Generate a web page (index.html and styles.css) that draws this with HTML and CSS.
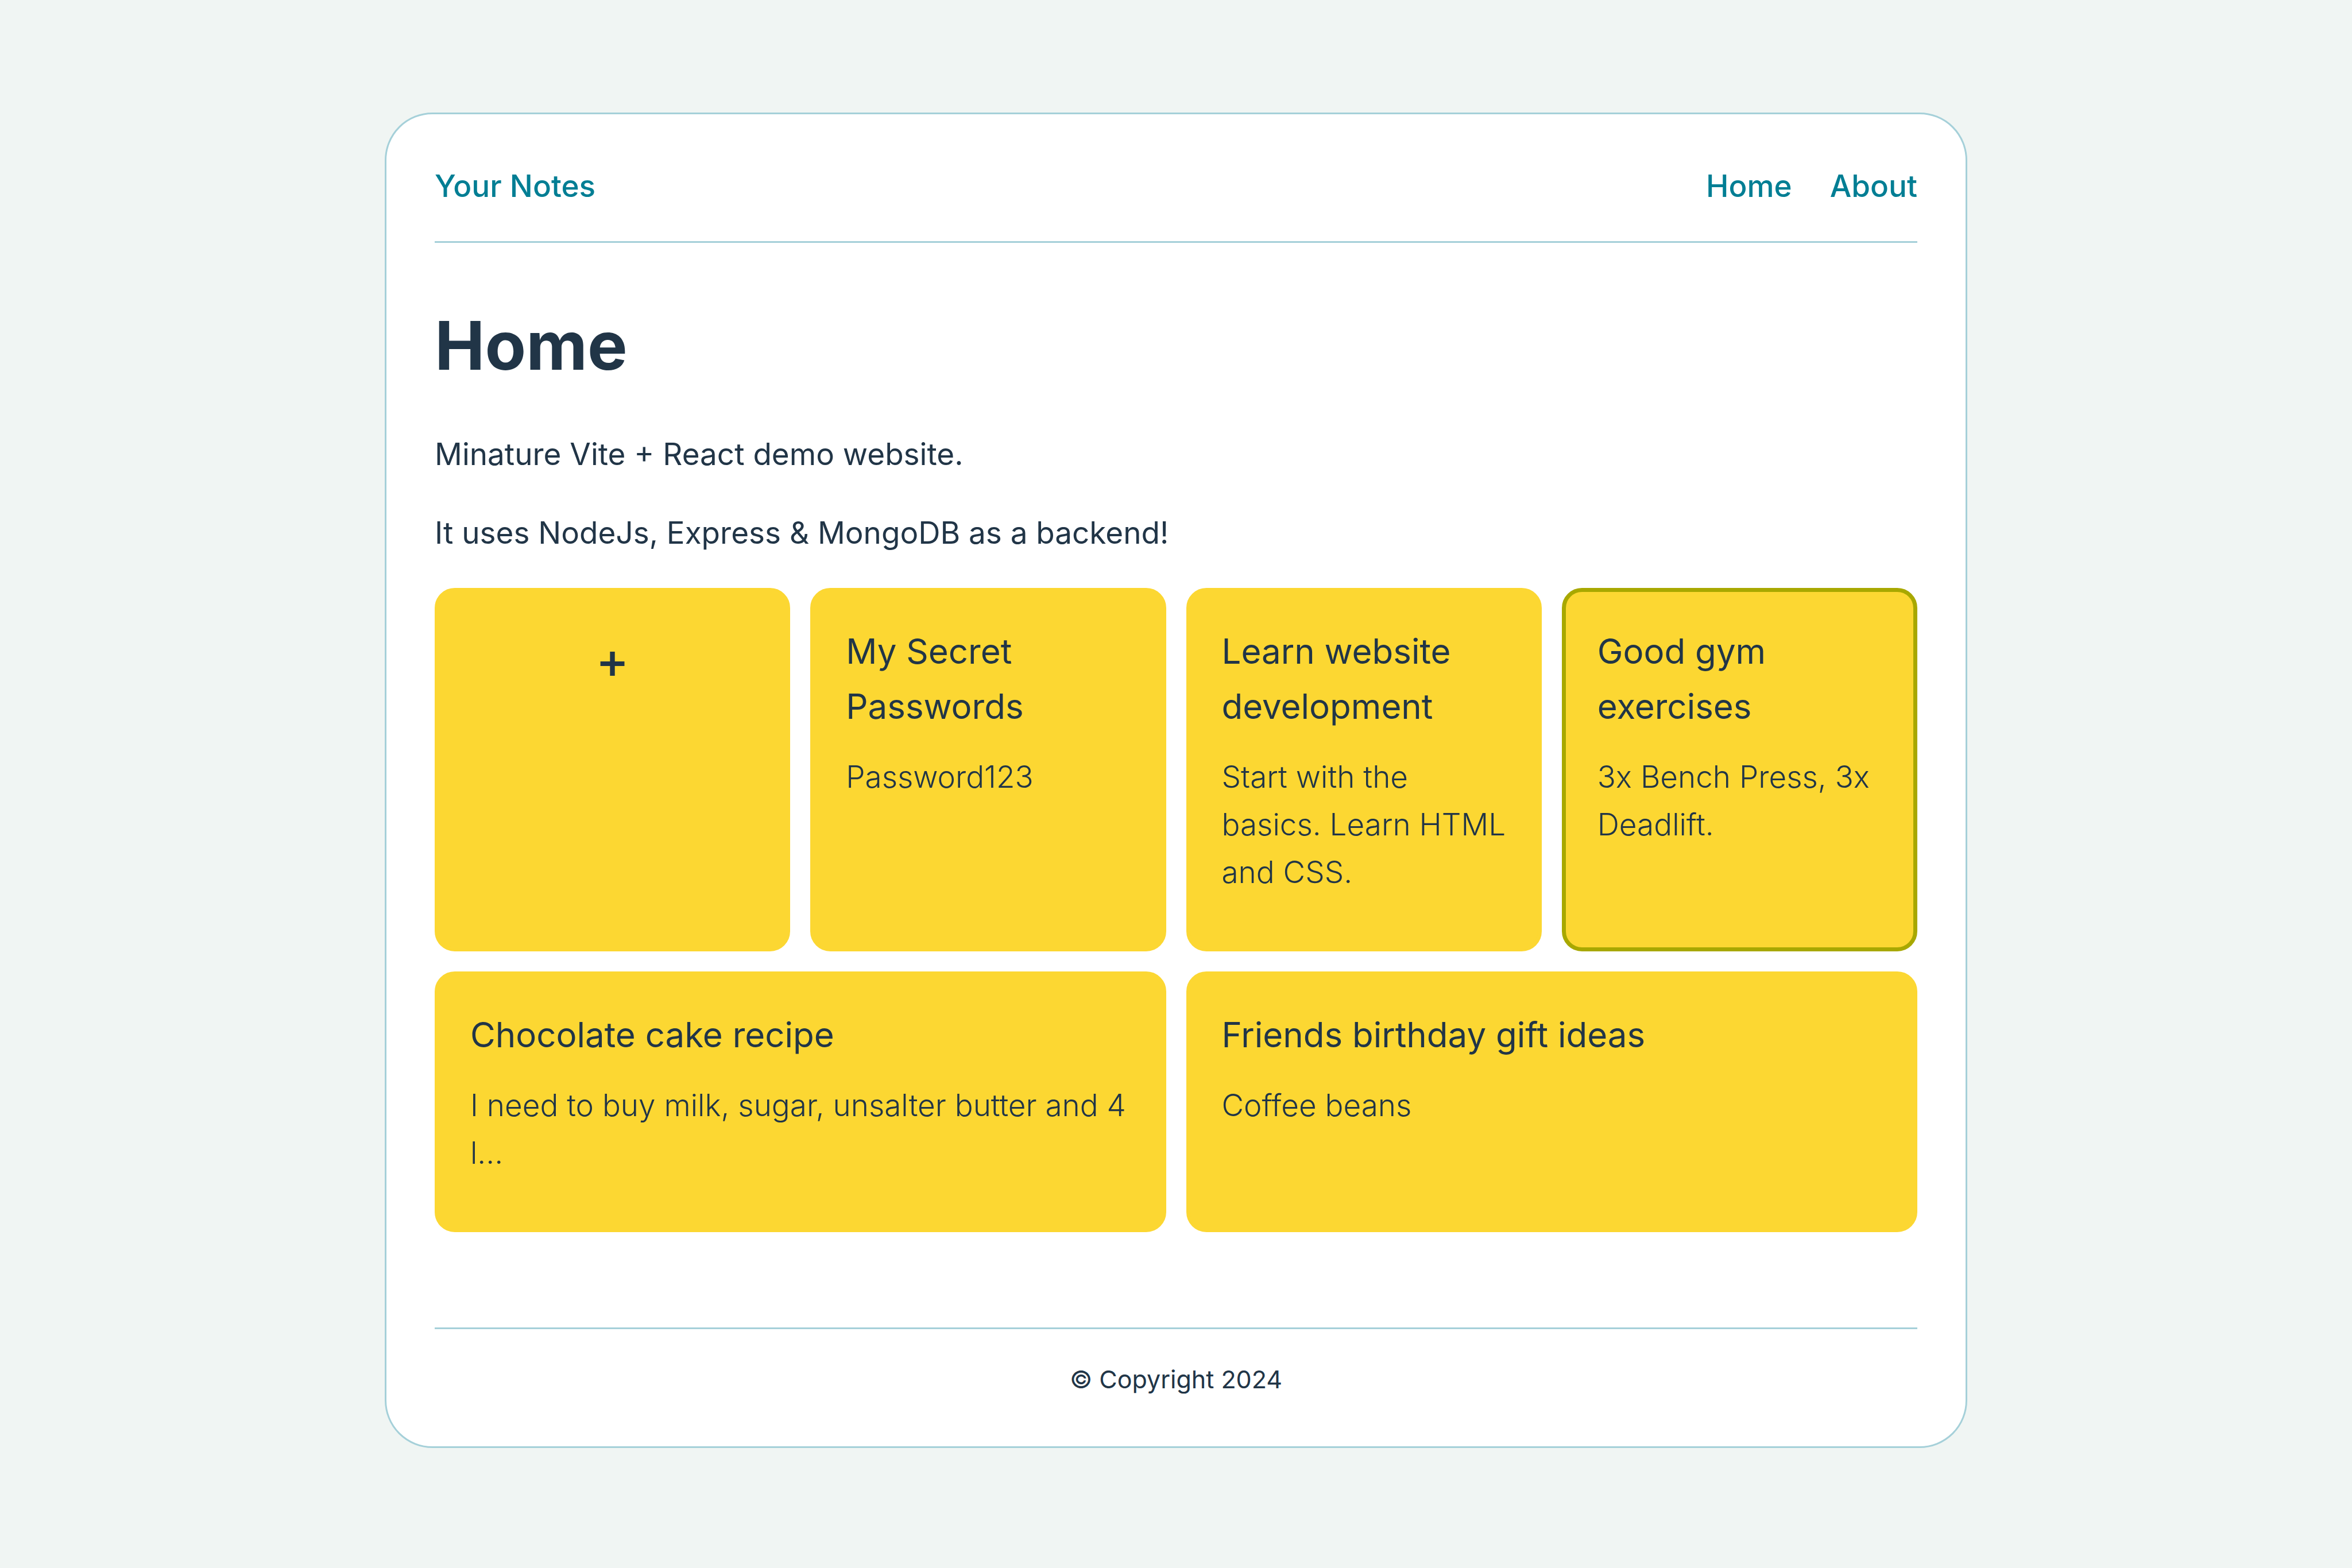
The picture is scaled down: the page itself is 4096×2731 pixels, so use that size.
FILE: index.html
```html
<!DOCTYPE html>
<html lang="en">
<head>
  <meta charset="utf-8">
  <meta name="viewport" content="width=device-width, initial-scale=1">
  <title>Your Notes</title>
  <link rel="stylesheet" href="styles.css">
</head>
<body>
  <div class="app">
    <header class="header">
      <a class="link" href="#">Your Notes</a>
      <nav class="nav">
        <a class="link" href="#">Home</a>
        <a class="link" href="#about">About</a>
      </nav>
    </header>

    <main class="main">
      <h1 class="heading">Home</h1>
      <p class="text">Minature Vite + React demo website.</p>
      <p class="text">It uses NodeJs, Express &amp; MongoDB as a backend!</p>

      <div class="notes">
        <button class="note note-add" type="button" aria-label="Add note">+</button>
        <article class="note">
          <h3 class="note-title">My Secret Passwords</h3>
          <p class="note-body">Password123</p>
        </article>
        <article class="note">
          <h3 class="note-title">Learn website development</h3>
          <p class="note-body">Start with the basics. Learn HTML and CSS.</p>
        </article>
        <article class="note note-selected">
          <h3 class="note-title">Good gym exercises</h3>
          <p class="note-body">3x Bench Press, 3x Deadlift.</p>
        </article>
        <article class="note note-wide">
          <h3 class="note-title">Chocolate cake recipe</h3>
          <p class="note-body">I need to buy milk, sugar, unsalter butter and 4 l...</p>
        </article>
        <article class="note note-wide">
          <h3 class="note-title">Friends birthday gift ideas</h3>
          <p class="note-body">Coffee beans</p>
        </article>
      </div>
    </main>

    <footer class="footer">© Copyright 2024</footer>
  </div>
</body>
</html>
```
FILE: styles.css
```css
:root {
  --ink: #213547;
  --teal: #007e94;
  --line: #a5d0d9;
  --note: #fcd732;
  --note-selected: #a8a800;
}

*,
*::before,
*::after {
  box-sizing: border-box;
}

body {
  margin: 0;
  padding: 196px 84px;
  background: #f0f5f3;
  color: var(--ink);
  font-family: Inter, "Liberation Sans", sans-serif;
  font-size: 53px;
  line-height: 83px;
}

.app {
  max-width: 2756px;
  margin: 0 auto;
  padding: 84px;
  background: #fff;
  border: 3px solid var(--line);
  border-radius: 83px;
}

.header {
  display: flex;
  justify-content: space-between;
  padding-bottom: 54px;
  border-bottom: 3px solid var(--line);
}

.nav {
  display: flex;
  gap: 66px;
}

.link {
  color: var(--teal);
  font-weight: 500;
  text-decoration: none;
}

.main {
  padding: 112px 0 166px;
}

.heading {
  margin: 0 0 81px;
  font-size: 117px;
  font-weight: 700;
  line-height: 134px;
}

.text {
  margin: 0 0 54px;
}

.notes {
  display: grid;
  grid-template-columns: repeat(4, minmax(0, 1fr));
  gap: 35px;
}

.note {
  padding: 55px;
  background: var(--note);
  border: 7px solid var(--note);
  border-radius: 35px;
}

.note-wide {
  grid-column: span 2;
}

.note-selected {
  border-color: var(--note-selected);
}

.note-add {
  display: flex;
  justify-content: center;
  align-items: flex-start;
  color: inherit;
  font-family: inherit;
  font-size: 87px;
  font-weight: 500;
  line-height: 128px;
  cursor: pointer;
}

.note-title {
  margin: 0;
  font-size: 60px;
  font-weight: 400;
  line-height: 96px;
}

.note-body {
  margin: 34px 0;
  font-weight: 300;
}

.footer {
  padding-top: 54px;
  border-top: 3px solid var(--line);
  font-size: 43px;
  line-height: 66px;
  text-align: center;
}
```
